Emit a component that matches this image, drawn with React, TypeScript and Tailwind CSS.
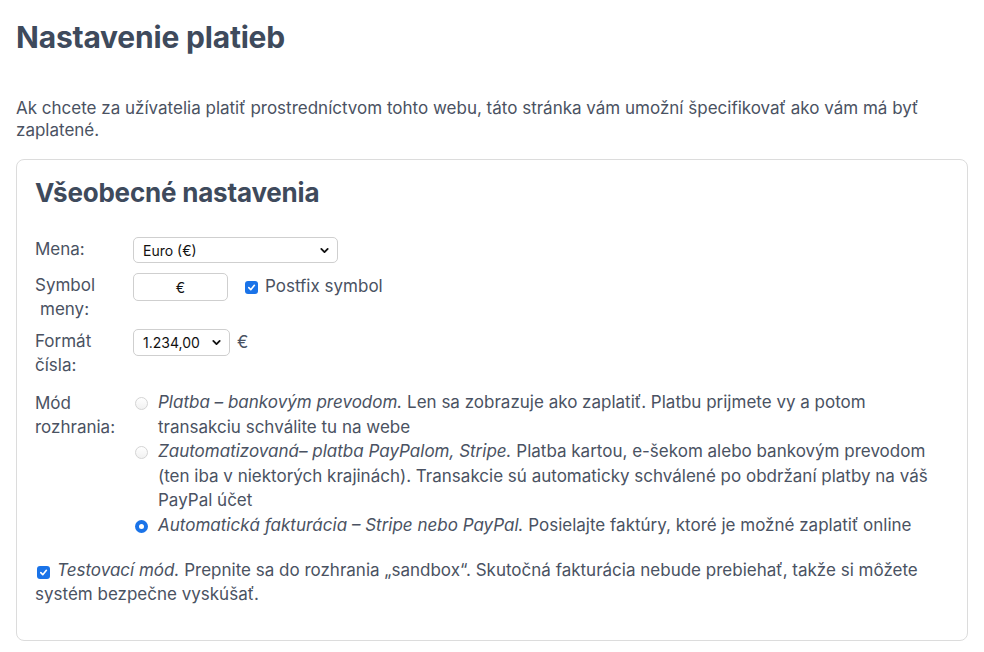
import type { ReactNode } from 'react'

const Chevron = () => (
  <svg width="11" height="11" viewBox="0 0 12 12" className="shrink-0">
    <polyline
      points="2.5,4.2 6,7.8 9.5,4.2"
      fill="none"
      stroke="#111"
      strokeWidth="2"
      strokeLinecap="round"
      strokeLinejoin="round"
    />
  </svg>
)

const Check = ({ className = '' }: { className?: string }) => (
  <span
    className={`inline-flex h-[13px] w-[13px] items-center justify-center rounded-[3px] bg-[#1a73e8] align-[-1px] ${className}`}
  >
    <svg width="9" height="9" viewBox="0 0 10 10">
      <polyline
        points="2,5.2 4.2,7.4 8.2,2.6"
        fill="none"
        stroke="#fff"
        strokeWidth="1.8"
        strokeLinecap="round"
        strokeLinejoin="round"
      />
    </svg>
  </span>
)

const Radio = ({ on }: { on?: boolean }) =>
  on ? (
    <span className="mt-[7px] ml-[2px] flex h-[13px] w-[13px] shrink-0 items-center justify-center rounded-full bg-[#1a73e8]">
      <span className="h-[5px] w-[5px] rounded-full bg-white" />
    </span>
  ) : (
    <span className="mt-[7px] ml-[2px] h-[13px] w-[13px] shrink-0 rounded-full border border-[#d4d4d4] bg-gradient-to-b from-white to-[#f1f1f1]" />
  )

const Row = ({ label, children, className = '' }: { label: ReactNode; children: ReactNode; className?: string }) => (
  <div className={`grid grid-cols-[98px_1fr] ${className}`}>
    <div className="pr-2 leading-[24px]">{label}</div>
    <div>{children}</div>
  </div>
)

const modes = [
  {
    title: 'Platba – bankovým prevodom.',
    text: 'Len sa zobrazuje ako zaplatiť. Platbu prijmete vy a potom transakciu schválite tu na webe',
  },
  {
    title: 'Zautomatizovaná– platba PayPalom, Stripe.',
    text: 'Platba kartou, e-šekom alebo bankovým prevodom (ten iba v niektorých krajinách). Transakcie sú automaticky schválené po obdržaní platby na váš PayPal účet',
  },
  {
    title: 'Automatická fakturácia – Stripe nebo PayPal.',
    text: 'Posielajte faktúry, ktoré je možné zaplatiť online',
    on: true,
  },
]

export default function App() {
  return (
    <div className="min-h-[652px] bg-white px-4 pb-4 font-['Inter','Noto_Sans',sans-serif] text-[17px] text-[#4a5262]">
      <h1 className="pt-[19px] text-[30px] leading-[36px] font-bold tracking-[-0.2px] text-[#3e4a5c]">
        Nastavenie platieb
      </h1>
      <p className="mt-[42px] pr-10 leading-[22px]">
        Ak chcete za užívatelia platiť prostredníctvom tohto webu, táto stránka vám umožní špecifikovať ako vám má byť
        zaplatené.
      </p>

      <div className="mt-[18px] rounded-lg border border-[#dcdcdc] px-[18px] pt-[17px] pb-[34px]">
        <h2 className="text-[26px] leading-[32px] font-bold tracking-[-0.2px] text-[#3e4a5c]">Všeobecné nastavenia</h2>

        <Row label="Mena:" className="mt-[28px]">
          <div className="flex h-[26px] w-[205px] items-center justify-between rounded-[5px] border border-[#cfcfcf] bg-white pr-[7px] pl-[9px] text-[14px] text-[#111]">
            <span>Euro (€)</span>
            <Chevron />
          </div>
        </Row>

        <Row
          label={
            <>
              Symbol
              <br />
              <span className="pl-[5px]">meny:</span>
            </>
          }
          className="mt-[10px]"
        >
          <div className="flex items-center">
            <div className="flex h-[28px] w-[95px] items-center justify-center rounded-[5px] border border-[#cfcfcf] text-[14px] text-[#111]">
              €
            </div>
            <Check className="ml-[17px]" />
            <span className="ml-[7px]">Postfix symbol</span>
          </div>
        </Row>

        <Row
          label={
            <>
              Formát
              <br />
              čísla:
            </>
          }
          className="mt-[8px]"
        >
          <div className="flex items-center">
            <div className="flex h-[27px] w-[97px] items-center justify-between rounded-[5px] border border-[#cfcfcf] pr-[7px] pl-[9px] text-[14px] text-[#111]">
              <span>1.234,00</span>
              <Chevron />
            </div>
            <span className="ml-[7px]">€</span>
          </div>
        </Row>

        <Row label="Mód rozhrania:" className="mt-[14px]">
          <div className="-mt-[1px] flex flex-col">
            {modes.map((m) => (
              <div key={m.title} className="flex gap-[10px] leading-[24.6px]">
                <Radio on={m.on} />
                <p>
                  <em>{m.title}</em> {m.text}
                </p>
              </div>
            ))}
          </div>
        </Row>

        <p className="mt-[20px] pr-6 leading-[24px]">
          <Check className="mr-[7px] ml-[2px]" />
          <em>Testovací mód.</em> Prepnite sa do rozhrania „sandbox“. Skutočná fakturácia nebude prebiehať, takže si
          môžete systém bezpečne vyskúšať.
        </p>
      </div>
    </div>
  )
}
